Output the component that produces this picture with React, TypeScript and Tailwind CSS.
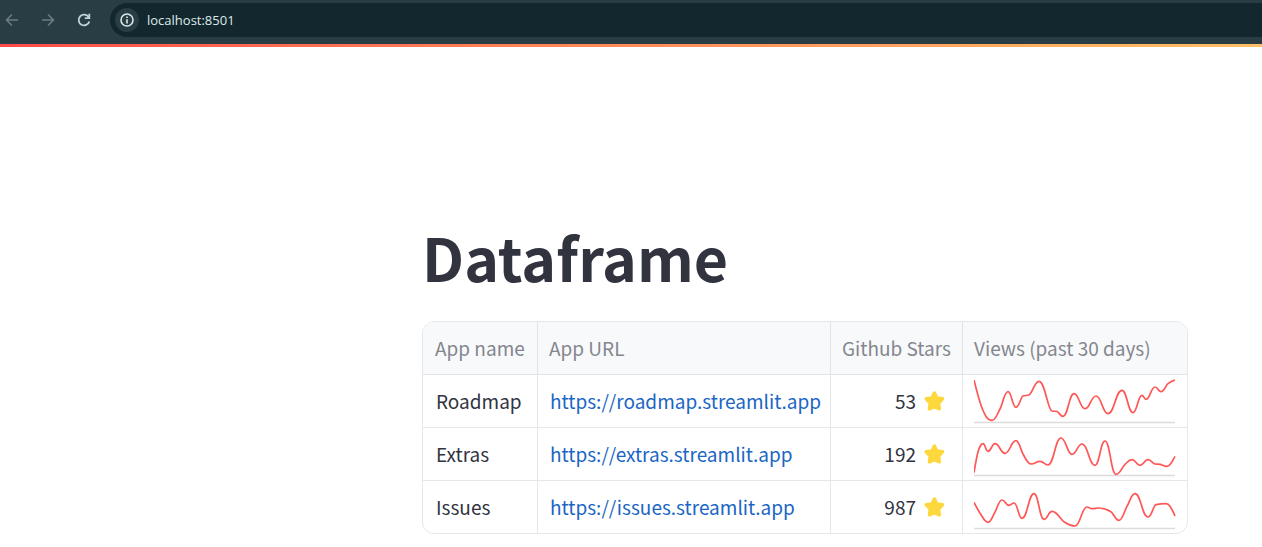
type Point = [number, number];

type AppRow = {
  name: string;
  url: string;
  stars: number;
  views: Point[];
};

const rows: AppRow[] = [
  {
    name: "Roadmap",
    url: "https://roadmap.streamlit.app",
    stars: 53,
    views: [
      [0, 5], [8, 33], [18, 45.3], [26, 34], [34, 16.7], [42, 32.3], [49, 21], [55, 20], [65, 6.3],
      [78, 36], [83, 36.5], [89, 41.3], [100, 18.7], [111, 33.7], [122, 21], [134, 38.7], [148, 15.3],
      [159, 37.7], [168, 20.3], [172, 24.3], [181, 12], [187, 16.7], [194, 8.7], [201, 5],
    ],
  },
  {
    name: "Extras",
    url: "https://extras.streamlit.app",
    stars: 192,
    views: [
      [0, 44.7], [4, 24], [9, 15.7], [14, 23.3], [21, 15.7], [31, 25.3], [42, 12.7], [49, 26],
      [57, 36], [66, 33.3], [74, 37], [87, 10], [98, 26.3], [108, 16], [121, 37.3], [131, 13],
      [142, 46.3], [151, 36.3], [158, 31.7], [166, 37.3], [174, 31.7], [181, 36], [186, 36.3],
      [193, 38.3], [201, 28.3],
    ],
  },
  {
    name: "Issues",
    url: "https://issues.streamlit.app",
    stars: 987,
    views: [
      [0, 21.3], [7, 33.7], [14, 41.3], [21, 31], [28, 19], [35, 24.3], [40, 22], [48, 37.3], [60, 12.7],
      [70, 38.3], [78, 30.3], [90, 40.7], [101, 45], [113, 26], [118, 27.7], [125, 27],
      [137, 30.7], [145, 39.3], [153, 25.3], [161, 12.7], [174, 36], [182, 23.7], [192, 22.7], [201, 35],
    ],
  },
];

// Share of a segment that a control handle spans; a flat extreme gets the
// longer one, which rounds its peak.
const HANDLE = 0.33;
const PEAK_HANDLE = 0.46;

// Monotone interpolation: flat at every local extreme, no overshoot.
function monotonePath(points: Point[]): string {
  const last = points.length - 1;
  const width = (i: number) => points[i + 1][0] - points[i][0];
  const slope = (i: number) => (points[i + 1][1] - points[i][1]) / width(i);
  const tangents = points.map((_, i) => {
    if (i === 0) return slope(0);
    if (i === last) return slope(last - 1);
    const before = slope(i - 1);
    const after = slope(i);
    const blend = (before * width(i) + after * width(i - 1)) / (width(i - 1) + width(i));
    return (
      (Math.sign(before) + Math.sign(after)) *
      Math.min(Math.abs(before), Math.abs(after), Math.abs(blend) / 2)
    );
  });
  tangents[0] = (3 * slope(0) - tangents[1]) / 2;
  tangents[last] = (3 * slope(last - 1) - tangents[last - 1]) / 2;
  const handle = (i: number) => (tangents[i] === 0 ? PEAK_HANDLE : HANDLE);
  let d = `M${points[0][0]},${points[0][1]}`;
  for (let i = 0; i < last; i++) {
    const [x0, y0] = points[i];
    const [x1, y1] = points[i + 1];
    const out = (x1 - x0) * handle(i);
    const into = (x1 - x0) * handle(i + 1);
    d += `C${x0 + out},${y0 + tangents[i] * out} ${x1 - into},${y1 - tangents[i + 1] * into} ${x1},${y1}`;
  }
  return d;
}

function Sparkline({ points, label }: { points: Point[]; label: string }) {
  return (
    <svg width="202" height="52" viewBox="0 0 202 52" role="img" aria-label={label} className="block">
      <path d="M0 47.5H201" stroke="#dcdcdc" strokeWidth="1.6" />
      <path d={monotonePath(points)} fill="none" stroke="#ff5656" strokeWidth="1.7" strokeLinejoin="round" />
    </svg>
  );
}

function Star() {
  return (
    <svg width="22" height="22" viewBox="0 0 22 22" aria-hidden="true">
      <path
        d="M11.4 2.9L13.9 7.9L19.6 8.8L15.6 13L16.4 18.9L11.4 16.7L6.4 18.9L7.2 13L3.2 8.8L8.9 7.9Z"
        fill="#fdd83d"
        stroke="#fdd83d"
        strokeWidth="3.4"
        strokeLinejoin="round"
      />
    </svg>
  );
}

function BrowserBar() {
  return (
    <header className="flex h-11 items-start bg-[#283e44] pt-[3px]">
      <nav className="flex h-[34px] w-[110px] shrink-0 items-center">
        <button type="button" aria-label="Back" className="flex w-6 justify-center text-[#6b7c81]">
          <svg width="14" height="14" viewBox="0 0 14 14" fill="none" stroke="currentColor" strokeWidth="1.6">
            <path d="M13 7H2M7 1.5L1.5 7L7 12.5" />
          </svg>
        </button>
        <button type="button" aria-label="Forward" className="ml-3 flex w-6 justify-center text-[#6b7c81]">
          <svg width="14" height="14" viewBox="0 0 14 14" fill="none" stroke="currentColor" strokeWidth="1.6">
            <path d="M1 7H12M7 1.5L12.5 7L7 12.5" />
          </svg>
        </button>
        <button type="button" aria-label="Reload" className="ml-3 flex w-6 justify-center text-[#c2d4d9]">
          <svg width="14" height="14" viewBox="0 0 14 14" fill="none" stroke="currentColor" strokeWidth="1.8">
            <path d="M11.6 4A5.4 5.4 0 1 0 12.3 8.4" />
            <path d="M12.3 0.8V5.2H7.8" />
          </svg>
        </button>
      </nav>
      <div className="flex h-[34px] grow items-center rounded-l-full bg-[#12282e] pl-[5px]">
        <button
          type="button"
          aria-label="View site information"
          className="flex size-6 shrink-0 items-center justify-center rounded-full bg-[#283e44] text-[#dce6e8]"
        >
          <svg width="14" height="14" viewBox="0 0 14 14" fill="none" stroke="currentColor" strokeWidth="1.6">
            <circle cx="7" cy="7" r="6" />
            <path d="M7 6.2V10.4M7 3.6V5.1" />
          </svg>
        </button>
        <input
          type="text"
          aria-label="Address"
          defaultValue="localhost:8501"
          className="ml-2 h-6 min-w-0 grow bg-transparent font-['Open_Sans','Noto_Sans',sans-serif] text-[13px] text-[#dfe8ea] outline-none"
        />
      </div>
    </header>
  );
}

function AppTable() {
  return (
    <div className="w-[766px] overflow-hidden rounded-[12px] border border-[#e6e7ea]">
      <table className="w-full table-fixed border-separate border-spacing-0 text-[19px] leading-6 text-[#31333f]">
        <colgroup>
          <col className="w-[115px]" />
          <col className="w-[293px]" />
          <col className="w-[132px]" />
          <col />
        </colgroup>
        <thead className="bg-[#f8f9fb] text-[#84868e] [&_th]:h-[53px] [&_th]:border-b [&_th]:border-[#e2e3e6] [&_th]:font-normal [&_th]:whitespace-nowrap [&_th]:p-0">
          <tr>
            <th scope="col" className="border-r text-left"><span className="pl-3">App name</span></th>
            <th scope="col" className="border-r text-left"><span className="pl-[11px]">App URL</span></th>
            <th scope="col" className="border-r text-left"><span className="pl-[11px]">Github Stars</span></th>
            <th scope="col" className="text-left"><span className="pl-[11px]">Views (past 30 days)</span></th>
          </tr>
        </thead>
        <tbody className="[&_td]:h-[53px] [&_td]:border-[#e6e7ea] [&_td]:p-0 [&_td]:whitespace-nowrap [&_tr:last-child_td]:h-[52px] [&_tr:last-child_td]:border-b-0">
          {rows.map((row) => (
            <tr key={row.name}>
              <td className="border-r border-b"><span className="pl-[13px]">{row.name}</span></td>
              <td className="border-r border-b">
                <a href={row.url} className="pl-3 text-[#1a66c4]">{row.url}</a>
              </td>
              <td className="border-r border-b">
                <span className="flex items-center justify-end gap-[7px] pr-[17px]">
                  {row.stars}
                  <Star />
                </span>
              </td>
              <td className="border-b">
                <div className="pl-[11px]">
                  <Sparkline points={row.views} label={`${row.name} views`} />
                </div>
              </td>
            </tr>
          ))}
        </tbody>
      </table>
    </div>
  );
}

export default function App() {
  return (
    <div className="min-h-screen bg-white font-['Noto_Sans_CJK_SC',sans-serif]">
      <BrowserBar />
      <div className="h-[3px] bg-linear-to-r from-[#ff4b4b] to-[#ffbf66]" />
      <main className="pt-[174px] pb-3 pl-[422px]">
        <h1 className="pb-[28px] text-[59px] leading-[72px] font-bold text-[#31333f]">Dataframe</h1>
        <AppTable />
      </main>
    </div>
  );
}
